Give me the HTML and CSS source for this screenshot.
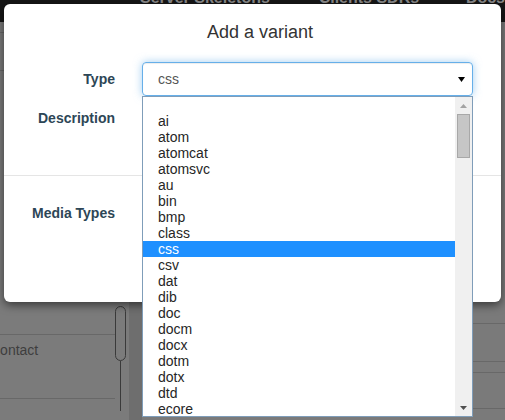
FILE: index.html
```html
<!DOCTYPE html>
<html>
<head>
<meta charset="utf-8">
<link rel="stylesheet" href="styles.css">
</head>
<body>
<div class="page">
  <nav class="topbar">
    <span class="nav-item nav-a">Server Skeletons</span>
    <span class="nav-item nav-b">Clients SDKs</span>
    <span class="nav-item">Docs</span>
  </nav>
  <div class="content">
    <div class="left">
      <div class="rows">
        <div class="row r1"></div>
        <div class="row r2"></div>
        <div class="row r3"></div>
        <div class="row r4"><span class="contact">Contact</span></div>
      </div>
      <div class="track">
        <div class="pill"></div>
        <div class="stem"></div>
      </div>
    </div>
    <div class="strip"></div>
    <div class="center"></div>
    <div class="right">
      <div class="row q1"></div>
      <div class="row q2"></div>
      <div class="row q3"></div>
      <div class="row q4"></div>
    </div>
  </div>
</div>

<div class="modal">
  <div class="modal-header">
    <h4 class="modal-title">Add a variant</h4>
  </div>
  <form class="form">
    <div class="group group-type">
      <label class="label label-type">Type</label>
      <div class="control select">
        <span>css</span>
        <svg class="caret" width="7" height="5" viewBox="0 0 7 5"><polygon points="0,0 7,0 3.5,5" fill="#000"/></svg>
      </div>
    </div>
    <div class="group group-desc">
      <label class="label">Description</label>
      <div class="control textarea"></div>
    </div>
    <div class="divider"></div>
    <div class="group group-media">
      <label class="label">Media Types</label>
      <div class="control media"></div>
    </div>
  </form>
</div>

<div class="dropdown">
  <ul class="options">
    <li class="option">&nbsp;</li>
    <li class="option">ai</li>
    <li class="option">atom</li>
    <li class="option">atomcat</li>
    <li class="option">atomsvc</li>
    <li class="option">au</li>
    <li class="option">bin</li>
    <li class="option">bmp</li>
    <li class="option">class</li>
    <li class="option selected">css</li>
    <li class="option">csv</li>
    <li class="option">dat</li>
    <li class="option">dib</li>
    <li class="option">doc</li>
    <li class="option">docm</li>
    <li class="option">docx</li>
    <li class="option">dotm</li>
    <li class="option">dotx</li>
    <li class="option">dtd</li>
    <li class="option">ecore</li>
    <li class="option">eml</li>
    <li class="option">eps</li>
  </ul>
  <div class="scrollbar">
    <div class="sb-btn"><svg width="7" height="4" viewBox="0 0 7 4"><polygon points="0,4 7,4 3.5,0" fill="#a3a3a3"/></svg></div>
    <div class="thumb"></div>
    <div class="sb-space"></div>
    <div class="sb-btn"><svg width="7" height="4" viewBox="0 0 7 4"><polygon points="0,0 7,0 3.5,4" fill="#505050"/></svg></div>
  </div>
</div>
</body>
</html>
```
FILE: styles.css
```css
* { box-sizing: border-box; }
html, body { margin: 0; padding: 0; }
body {
  width: 505px;
  height: 420px;
  overflow: hidden;
  position: relative;
  font-family: "Liberation Sans", Arial, Helvetica, sans-serif;
  background: #7a7a7a;
}

/* ---------- dimmed page behind ---------- */
.topbar {
  height: 22px;
  background: #161616;
  display: flex;
  padding-left: 140px;
  overflow: hidden;
}
.nav-item {
  font-weight: bold;
  font-size: 16px;
  line-height: 16px;
  margin-top: -10px;
  color: #8a8a8a;
  white-space: nowrap;
}
.nav-a { width: 182px; }
.nav-b { width: 150px; }

.content {
  display: flex;
  height: 398px;
}
.left {
  width: 129px;
  display: flex;
  background: #7b7b7b;
}
.rows {
  width: 115px;
  display: flex;
  flex-direction: column;
}
.row { border-bottom: 1px solid #686868; }
.r1 { height: 11px; }
.r2 { height: 38px; }
.r3 { height: 264px; }
.r4 { height: 64px; padding-top: 7px; overflow: hidden; }
.contact {
  display: block;
  margin-left: -10px;
  font-size: 14px;
  line-height: 16px;
  color: #3e3e3e;
}
.track {
  width: 14px;
  padding-top: 284px;
  display: flex;
  flex-direction: column;
}
.pill {
  width: 11px;
  height: 55px;
  border: 1px solid #3a3a3a;
  border-radius: 6px;
}
.stem {
  width: 1px;
  margin-left: 5px;
  height: 50px;
  background: #3a3a3a;
}
.strip { width: 13px; background: #6e6e6e; }
.center { flex: 1; }
.right { width: 32px; display: flex; flex-direction: column; }
.q1 { height: 302px; }
.q2 { height: 38px; }
.q3 { height: 11px; }
.q4 { height: 36px; }

/* ---------- modal ---------- */
.modal {
  position: absolute;
  left: 4px;
  top: 4px;
  width: 497px;
  height: 298px;
  background: #fff;
  border-radius: 6px;
  box-shadow: 0 3px 10px rgba(0, 0, 0, 0.55);
}
.modal-header {
  padding: 18px 0 20px 15px;
  text-align: center;
}
.modal-title {
  margin: 0;
  font-size: 18px;
  line-height: 20px;
  font-weight: normal;
  color: #333;
}
.form { margin: 0; }
.group { display: flex; }
.label {
  width: 138px;
  padding-right: 27px;
  text-align: right;
  font-weight: bold;
  font-size: 14px;
  line-height: 20px;
  color: #2d4656;
}
.control { width: 331px; }
.group-type { height: 34px; }
.label-type { line-height: 34px; }
.select {
  height: 34px;
  border: 1px solid #66afe9;
  border-radius: 4px;
  box-shadow: inset 0 1px 1px rgba(0, 0, 0, 0.075), 0 0 8px rgba(102, 175, 233, 0.6);
  padding: 0 7px 0 15px;
  display: flex;
  align-items: center;
  justify-content: space-between;
  font-size: 14px;
  color: #555;
}
.caret { display: block; }
.group-desc { margin-top: 8px; }
.group-desc .label { padding-top: 4px; }
.textarea {
  height: 56px;
  border: 1px solid #ccc;
  border-radius: 4px;
}
.divider {
  margin-top: 15px;
  border-top: 1px solid #e5e5e5;
}
.group-media { margin-top: 27px; }
.media {
  height: 60px;
  border: 1px solid #ccc;
  border-radius: 4px;
}

/* ---------- open dropdown list ---------- */
.dropdown {
  position: absolute;
  left: 142px;
  top: 96px;
  width: 331px;
  height: 321px;
  background: #fff;
  border: 1px solid #7f9db9;
  display: flex;
}
.options {
  flex: 1;
  margin: 0;
  padding: 0;
  list-style: none;
  overflow: hidden;
}
.option {
  height: 16px;
  line-height: 16px;
  padding-left: 15px;
  font-size: 14px;
  color: #262626;
  white-space: nowrap;
}
.option.selected {
  background: #1e90ff;
  color: #fff;
}
.scrollbar {
  width: 17px;
  background: #f0f0f0;
  display: flex;
  flex-direction: column;
}
.sb-btn {
  height: 17px;
  display: flex;
  align-items: center;
  justify-content: center;
}
.sb-btn svg { display: block; }
.thumb {
  height: 44px;
  margin: 0 2px;
  background: #c6c6c6;
  border: 1px solid #a8a8a8;
}
.sb-space { flex: 1; }
```
